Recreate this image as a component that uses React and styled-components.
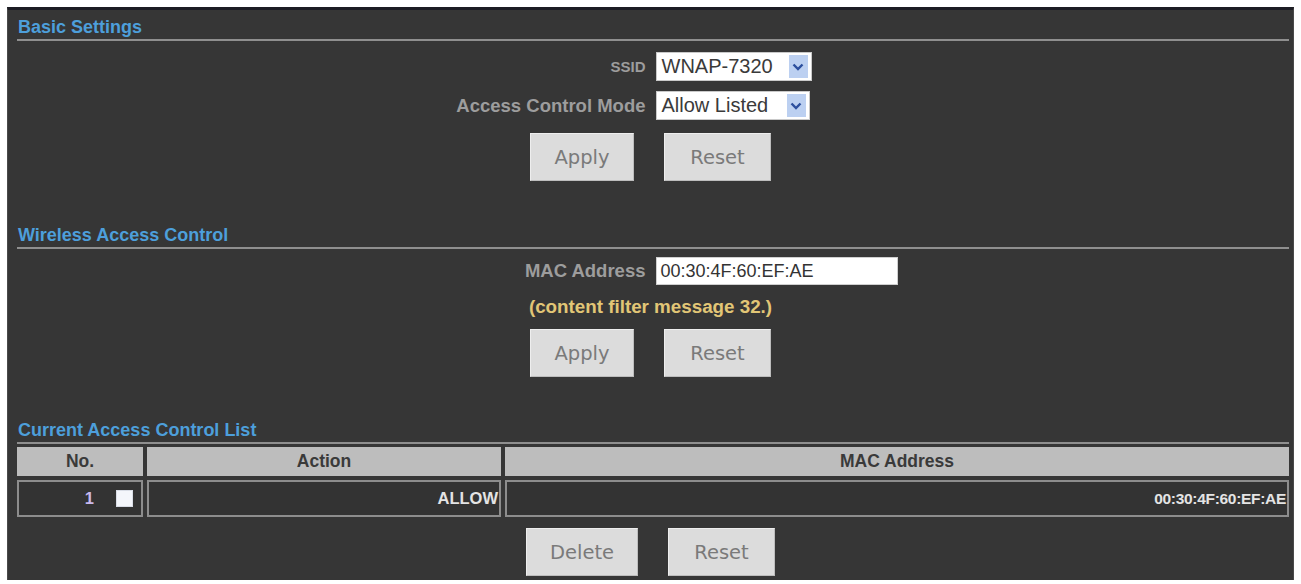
import React from "react";
import styled, { createGlobalStyle } from "styled-components";

const GlobalStyle = createGlobalStyle`
  body {
    margin: 0;
    background: #fff;
    font-family: "Liberation Sans", Arial, sans-serif;
  }
`;

const Panel = styled.div`
  width: 1287px;
  margin: 7px 7px 0;
  box-sizing: border-box;
  background: #363636;
  border-top: 3px solid #1d1d24;
  border-left: 1px solid #4a4a4a;
  border-right: 1px solid #4a4a4a;
  padding: 0 6px 4px;
`;

const SectionTitle = styled.div`
  margin: ${(p) => p.top}px -2px 0 3px;
  padding: 0 0 1px 1px;
  line-height: 22px;
  font-size: 18px;
  font-weight: 700;
  color: #4d9fdb;
  border-bottom: 2px solid #8f8f8f;
`;

const FormRow = styled.div`
  display: grid;
  grid-template-columns: 1fr 1fr;
  column-gap: 10px;
  align-items: center;
  margin-top: ${(p) => p.top}px;
`;

const Label = styled.label`
  justify-self: end;
  font-size: ${(p) => p.size || 18.5}px;
  font-weight: 700;
  color: #9d9d9d;
`;

const SelectBox = styled.div`
  justify-self: start;
  display: flex;
  align-items: center;
  justify-content: space-between;
  width: ${(p) => p.width}px;
  height: 29px;
  box-sizing: border-box;
  padding: 0 3px 0 5px;
  background: #fff;
  border: 1px solid #c9c9c9;
  font-size: 20px;
  color: #3a3a3a;
`;

const Arrow = styled.span`
  display: flex;
  align-items: center;
  justify-content: center;
  width: 19px;
  height: 23px;
  background: #bcd0f1;
`;

const TextInput = styled.div`
  justify-self: start;
  width: 242px;
  height: 28px;
  box-sizing: border-box;
  padding: 0 4px;
  line-height: 26px;
  background: #fff;
  border: 1px solid #cfcfcf;
  font-size: 18px;
  color: #333;
`;

const Message = styled.div`
  margin-top: 11px;
  line-height: 22px;
  text-align: center;
  font-size: 18.8px;
  font-weight: 700;
  color: #e2c676;
`;

const ButtonRow = styled.div`
  display: flex;
  justify-content: center;
  gap: 30px;
  margin-top: ${(p) => p.top}px;
`;

const Button = styled.button`
  width: ${(p) => p.width}px;
  height: 48px;
  padding: 0;
  background: #dcdcdc;
  border: 1px solid #eeeeee;
  border-right-color: #bdbdbd;
  border-bottom-color: #bdbdbd;
  font-family: "DejaVu Sans", Verdana, sans-serif;
  font-size: 19.5px;
  color: #7a7a7a;
`;

const Table = styled.div`
  display: grid;
  grid-template-columns: 126px 354px 1fr;
  gap: 4px;
  margin: 3px -2px 0 3px;
`;

const HeadCell = styled.div`
  height: 29px;
  line-height: 29px;
  background: #bdbdbd;
  text-align: center;
  font-size: 17.5px;
  font-weight: 700;
  color: #3a3a3a;
`;

const Cell = styled.div`
  display: flex;
  align-items: center;
  justify-content: flex-end;
  gap: 22px;
  height: 37px;
  box-sizing: border-box;
  padding-right: ${(p) => p.pad || 1}px;
  border: 2px solid #8d8d8d;
  background: #333;
  font-size: ${(p) => p.size || 16.5}px;
  font-weight: 700;
  letter-spacing: ${(p) => p.tight || 0}px;
  color: ${(p) => p.color || "#e4e4e4"};
`;

const Check = styled.span`
  width: 15px;
  height: 15px;
  background: #f4f6fb;
  border: 1px solid #d9dde6;
`;

const Chevron = () => (
  <svg width="12" height="8" viewBox="0 0 12 8">
    <path d="M1.5 1.5 L6 6 L10.5 1.5" fill="none" stroke="#2c4f9e" strokeWidth="2.4" />
  </svg>
);

const Select = ({ width, value }) => (
  <SelectBox width={width}>
    <span>{value}</span>
    <Arrow>
      <Chevron />
    </Arrow>
  </SelectBox>
);

export default function App() {
  return (
    <>
      <GlobalStyle />
      <Panel>
        <SectionTitle top={6}>Basic Settings</SectionTitle>
        <FormRow top={11}>
          <Label size={15}>SSID</Label>
          <Select width={156} value="WNAP-7320" />
        </FormRow>
        <FormRow top={10}>
          <Label>Access Control Mode</Label>
          <Select width={154} value="Allow Listed" />
        </FormRow>
        <ButtonRow top={13}>
          <Button width={104}>Apply</Button>
          <Button width={107}>Reset</Button>
        </ButtonRow>

        <SectionTitle top={43}>Wireless Access Control</SectionTitle>
        <FormRow top={8}>
          <Label>MAC Address</Label>
          <TextInput>00:30:4F:60:EF:AE</TextInput>
        </FormRow>
        <Message>(content filter message 32.)</Message>
        <ButtonRow top={11}>
          <Button width={104}>Apply</Button>
          <Button width={107}>Reset</Button>
        </ButtonRow>

        <SectionTitle top={42}>Current Access Control List</SectionTitle>
        <Table>
          <HeadCell>No.</HeadCell>
          <HeadCell>Action</HeadCell>
          <HeadCell>MAC Address</HeadCell>
          <Cell pad={8} color="#c9b8ec">
            1<Check />
          </Cell>
          <Cell>ALLOW</Cell>
          <Cell size={15.5} tight={-0.3}>00:30:4F:60:EF:AE</Cell>
        </Table>
        <ButtonRow top={11}>
          <Button width={112}>Delete</Button>
          <Button width={107}>Reset</Button>
        </ButtonRow>
      </Panel>
    </>
  );
}
